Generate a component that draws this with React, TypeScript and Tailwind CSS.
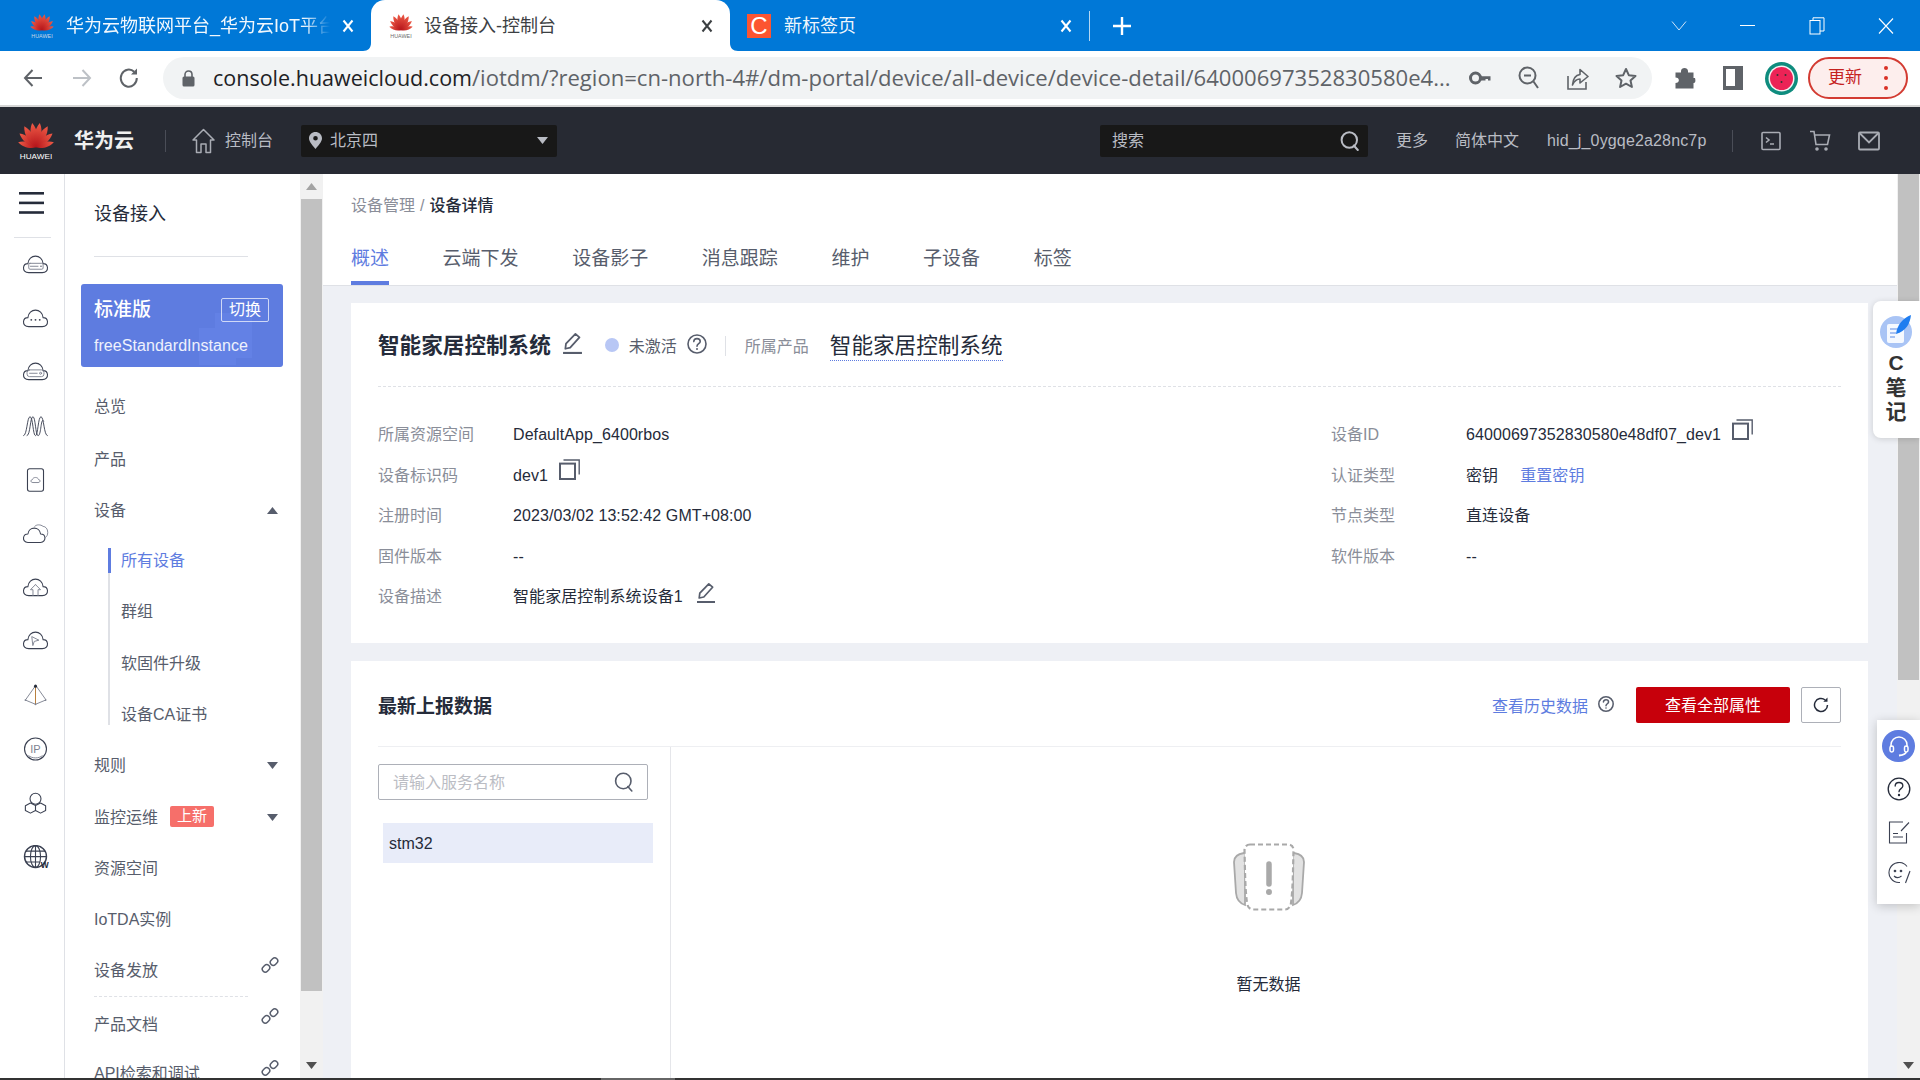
import React from "react";

const stroke = "#3b4152";
const soft = "#7d8290";

function Logo({ w, h, text, fade }: { w: number; h: number; text: string; fade?: boolean }) {
  const petals: [number, number][] = [[-74, 0.98], [-50, 1.14], [-29, 1.28], [-9, 1.3], [9, 1.3], [29, 1.28], [50, 1.14], [74, 0.98]];
  return (
    <svg width={w} height={h} viewBox="0 0 40 44" className="shrink-0">
      <defs>
        <linearGradient id="petal" x1="0" y1="0" x2="0" y2="1">
          <stop offset="0" stopColor={fade ? "#f26b60" : "#ef5b47"} />
          <stop offset="1" stopColor={fade ? "#d9333a" : "#b5141a"} />
        </linearGradient>
      </defs>
      {petals.map(([a, s]) => (
        <path key={a} d="M0 0C-4 -6 -3.8 -15 0 -21C3.8 -15 4 -6 0 0Z" fill="url(#petal)" transform={`translate(20 29) rotate(${a}) scale(${s})`} />
      ))}
      <text x="20" y="42" textAnchor="middle" fontSize="9" fontFamily="Liberation Sans" textLength="36" lengthAdjust="spacingAndGlyphs" fill={text}>HUAWEI</text>
    </svg>
  );
}

const cloud = "M8 23C3.5 23 1.5 20 1.8 17C2.1 14 4.5 12.4 7 12.4C7.4 7 11.5 3.5 16 3.5C20.5 3.5 24.6 7 25 12.4C27.5 12.4 29.9 14 30.2 17C30.5 20 28.5 23 24 23Z";

function RailIcon({ i }: { i: number }) {
  const common = { fill: "none", stroke, strokeWidth: 1.3, strokeLinejoin: "round" as const, strokeLinecap: "round" as const };
  const light = { fill: "none", stroke: soft, strokeWidth: 1.1, strokeLinejoin: "round" as const, strokeLinecap: "round" as const };
  let inner: React.ReactNode = null;
  switch (i) {
    case 0:
      inner = (<><path d={cloud} {...common} /><rect x="8" y="12" width="17" height="7" rx="1.5" {...light} /><path d="M10 15.5h9" {...light} /><circle cx="22.5" cy="15.5" r=".8" fill={stroke} /></>);
      break;
    case 1:
      inner = (<><path d={cloud} {...common} /><circle cx="11" cy="15" r="1.1" fill={stroke} /><circle cx="16" cy="15" r="1.1" fill={stroke} /><circle cx="21" cy="15" r="1.1" fill={stroke} /></>);
      break;
    case 2:
      inner = (<><path d={cloud} {...common} /><rect x="6" y="11.5" width="20" height="8" rx="3" {...light} /><path d="M9 15.5h9" {...light} /><circle cx="22" cy="15.5" r="1.2" {...light} /></>);
      break;
    case 3:
      inner = (<path d="M2 25.5C6 25.5 6 3 9.5 3C13 3 13 25.5 16 25.5C19 25.5 19 3 22.5 3C26 3 26 25.5 30 25.5M6 25.5C10 25.5 9.5 3 13 3C16 3 16 25.5 19 25.5C23 25.5 22 3 25.5 8" {...common} strokeWidth={1.1} />);
      break;
    case 4:
      inner = (<><rect x="6.5" y="0.7" width="19" height="26.6" rx="2.5" {...common} /><path d="M12.5 17C11 17 10.5 15.8 10.6 15C10.8 14 11.6 13.5 12.4 13.5C12.7 11.8 14.4 11 16 11C17.6 11 19.2 11.8 19.6 13.5C20.6 13.5 21.2 14 21.4 15C21.5 15.8 20.8 17 19.5 17Z" {...light} /></>);
      break;
    case 5:
      inner = (<><path d="M7 24C3 24 1.5 21 1.8 18.5C2.2 15.5 4.5 14 7 14C7.5 9.5 11 7 14.5 7C18 7 21.5 9.5 22 14C24.5 14 27 15.5 27.2 18.5C27.4 21 25.5 24 22 24Z" {...common} /><path d="M15 5C17 2.5 22 2.5 25 5C28 5 30.5 8 30.5 12C30.5 15 29.5 17 28 18" {...light} /></>);
      break;
    case 6:
      inner = (<><path d={cloud} {...common} /><path d="M16 10L10 16H13V23M16 10L22 16H19V23" {...light} /></>);
      break;
    case 7:
      inner = (<><path d={cloud} {...common} /><path d="M12 9L20 13L14.5 14.5L13 19Z" {...light} /></>);
      break;
    case 8:
      inner = (<><path d="M16 3L4 20L16 25L28 20Z" {...light} /><path d="M16 3V25" fill="none" stroke="#b9803f" strokeWidth={1.2} /><circle cx="16" cy="3.5" r="1.8" fill="#252b3a" /><circle cx="16" cy="25" r="1" fill={soft} /><circle cx="4" cy="20" r="1" fill={soft} /><circle cx="28" cy="20" r="1" fill={soft} /></>);
      break;
    case 9:
      inner = (<><circle cx="16" cy="14" r="13" {...common} /><path d="M8 22C12 25.5 20 25.5 24 22" {...light} /></>);
      break;
    case 10:
      inner = (<><circle cx="16" cy="9" r="6.5" {...common} /><path d="M10 14L4 17.2V23L10 26L16 23V17L22 14M16 17L10 14M22 14L28 17.2V23L22 26L16 23" {...common} /></>);
      break;
    default:
      inner = (<><circle cx="16" cy="13.5" r="13" {...common} strokeWidth={1.7} /><ellipse cx="16" cy="13.5" rx="6" ry="13" {...common} /><path d="M3 13.5h26M5 7h22M5 20h16M16 1v25" {...common} /></>);
  }
  return (
    <svg width="27" height="24" viewBox="0 0 32 28" className="shrink-0">
      {inner}
      {i === 9 && <text x="16" y="18.5" textAnchor="middle" fontSize="13" fontFamily="Liberation Sans" fill="#7d8290">IP</text>}
      {i === 11 && <text x="27" y="26.5" textAnchor="middle" fontSize="10" fontWeight="700" fontFamily="Liberation Sans" fill="#252b3a">W</text>}
    </svg>
  );
}

function Caret({ up, color = "#575d6c" }: { up?: boolean; color?: string }) {
  return (
    <svg width="11" height="7" viewBox="0 0 11 7" className="shrink-0">
      <path d={up ? "M5.5 0L11 7H0Z" : "M0 0H11L5.5 7Z"} fill={color} />
    </svg>
  );
}

function LinkIcon() {
  return (
    <svg width="18" height="18" viewBox="0 0 18 18" fill="none" stroke="#575d6c" strokeWidth="1.5" className="shrink-0">
      <rect x="1" y="9.4" width="8" height="6" rx="3" transform="rotate(-45 5 12.4)" />
      <rect x="9" y="2.6" width="8" height="6" rx="3" transform="rotate(-45 13 5.6)" />
    </svg>
  );
}

function Pencil({ size = 20, color = "#575d6c" }: { size?: number; color?: string }) {
  return (
    <svg width={size} height={size} viewBox="0 0 20 20" fill="none" stroke={color} strokeWidth="1.7" className="shrink-0">
      <path d="M3.2 15L3.8 10.2L12.8 0.9L16.6 4.2L7.8 14Z" strokeLinejoin="round" />
      <path d="M1 19H19" strokeWidth="2" />
    </svg>
  );
}

function Copy() {
  return (
    <svg width="21" height="21" viewBox="0 0 21 21" fill="none" stroke="#575d6c" className="shrink-0">
      <rect x="1" y="4.6" width="15" height="15.4" strokeWidth="2" />
      <path d="M4.5 1H20.2V15.5" strokeWidth="1.4" />
    </svg>
  );
}

function Help({ size = 18, color = "#575d6c", w = 1.6 }: { size?: number; color?: string; w?: number }) {
  return (
    <svg width={size} height={size} viewBox="0 0 20 20" fill="none" stroke={color} strokeWidth={w} className="shrink-0">
      <circle cx="10" cy="10" r="9" />
      <path d="M6.8 7.6C6.8 5.6 8.3 4.6 10 4.6C11.8 4.6 13.2 5.8 13.2 7.4C13.2 9.6 10 9.8 10 12.2" strokeLinecap="round" />
      <circle cx="10" cy="15" r="1" fill={color} stroke="none" />
    </svg>
  );
}

function Search({ size = 20, color = "#575d6c", w = 1.6 }: { size?: number; color?: string; w?: number }) {
  return (
    <svg width={size} height={size} viewBox="0 0 20 20" fill="none" stroke={color} strokeWidth={w} className="shrink-0">
      <circle cx="9.3" cy="9" r="7.7" />
      <path d="M13.8 14.5L17.8 19" strokeLinecap="round" />
    </svg>
  );
}

function TabX({ color }: { color: string }) {
  return (
    <svg width="12" height="14" viewBox="0 0 12 14" fill="none" stroke={color} strokeWidth="2" className="shrink-0">
      <path d="M1.5 1.5L10.5 12.5M10.5 1.5L1.5 12.5" />
    </svg>
  );
}

const navLabel = "flex items-center pl-[29px] pr-[22px] pt-[2px] text-[16px] text-[#575d6c]";

function Scroll({ thumb, top }: { thumb: string; top: string }) {
  return (
    <div className="w-[23px] shrink-0 bg-[#f1f1f1] flex flex-col items-center">
      {top === "arrow" ? (
        <div className="h-[25px] shrink-0 flex items-center justify-center"><Caret up color="#a3a3a3" /></div>
      ) : null}
      <div className={thumb} />
      <div className="flex-1" />
      <div className="h-[26px] shrink-0 flex items-center justify-center">
        <Caret color="#505050" />
      </div>
    </div>
  );
}

function InfoRow({ label, children }: { label: string; children: React.ReactNode }) {
  return (
    <div className="h-[40.5px] flex items-center text-[16px]">
      <div className="w-[135px] text-[#8a8e99] shrink-0">{label}</div>
      <div className="flex items-center text-[#252b3a] whitespace-nowrap tracking-[0.08px]">{children}</div>
    </div>
  );
}

export default function App() {
  return (
    <div className="relative w-[1920px] h-[1080px] overflow-hidden flex flex-col bg-white font-['Liberation_Sans','Noto_Sans_CJK_SC',sans-serif]">
      {/* browser tabs */}
      <div className="h-[51px] shrink-0 bg-[#0078d7] flex items-center">
        <div className="w-[371px] h-full flex items-center pl-[30px] shrink-0">
          <Logo w={24} h={26} text="#c9d6e6" />
          <div className="w-[264px] ml-[12px] pt-[2px] overflow-hidden whitespace-nowrap text-[18px] text-white/95 [mask-image:linear-gradient(to_right,black_90%,transparent)]">华为云物联网平台_华为云IoT平台</div>
          <div className="ml-[12px]"><TabX color="#ffffff" /></div>
        </div>
        <div className="relative w-[359px] h-full bg-white rounded-t-[14px] flex items-center pl-[18px] shrink-0">
          <svg width="8" height="8" viewBox="0 0 8 8" className="absolute -left-[8px] bottom-0"><path d="M8 0V8H0C5 8 8 5 8 0Z" fill="#fff" /></svg>
          <svg width="8" height="8" viewBox="0 0 8 8" className="absolute -right-[8px] bottom-0"><path d="M0 0V8H8C3 8 0 5 0 0Z" fill="#fff" /></svg>
          <Logo w={24} h={26} text="#6b6b6b" fade />
          <div className="w-[276px] ml-[11px] pt-[2px] whitespace-nowrap text-[18px] text-[#3c4043]">设备接入-控制台</div>
          <div className="ml-[1px]"><TabX color="#3c4043" /></div>
        </div>
        <div className="w-[359px] h-full flex items-center pl-[17px] shrink-0">
          <div className="w-[24px] h-[24px] bg-[#fc5531] flex items-center justify-center text-white text-[24px] leading-none shrink-0">C</div>
          <div className="w-[276px] ml-[13px] pt-[2px] whitespace-nowrap text-[18px] text-white/95">新标签页</div>
          <div><TabX color="#ffffff" /></div>
        </div>
        <div className="w-px h-[30px] bg-white/70 shrink-0" />
        <svg width="18" height="18" viewBox="0 0 18 18" stroke="#fff" strokeWidth="2.4" className="ml-[23px] shrink-0"><path d="M9 0V18M0 9H18" /></svg>
        <div className="flex-1" />
        <div className="flex items-center text-white">
          <div className="w-[69px] flex justify-center"><svg width="16" height="10" viewBox="0 0 16 10" fill="none" stroke="#cfe4f7" strokeWidth="1"><path d="M1 .5L8 9L15 .5" /></svg></div>
          <div className="w-[69px] flex justify-center"><div className="w-[15px] h-px bg-white" /></div>
          <div className="w-[69px] flex justify-center"><svg width="16" height="18" viewBox="0 0 16 18" fill="none" stroke="#fff" strokeWidth="1"><rect x="1" y="3.5" width="10" height="13.5" /><path d="M4 3.5V.8H15V14H11" /></svg></div>
          <div className="w-[69px] flex justify-center"><svg width="16" height="16" viewBox="0 0 16 16" fill="none" stroke="#fff" strokeWidth="1.1"><path d="M1 .5L15 15.5M15 .5L1 15.5" /></svg></div>
        </div>
      </div>
      {/* toolbar */}
      <div className="h-[54px] shrink-0 bg-white flex items-center pl-[8px]">
        <div className="w-[49px] flex justify-center"><svg width="20" height="20" viewBox="0 0 20 20" fill="none" stroke="#5f6368" strokeWidth="2"><path d="M19 10H2M9.5 2L2 10L9.5 18" /></svg></div>
        <div className="w-[49px] flex justify-center"><svg width="20" height="20" viewBox="0 0 20 20" fill="none" stroke="#bdc1c6" strokeWidth="2"><path d="M1 10H18M10.5 2L18 10L10.5 18" /></svg></div>
        <div className="w-[49px] pr-[3px] flex justify-center"><svg width="22" height="22" viewBox="0 0 22 22" fill="none" stroke="#5f6368" strokeWidth="2"><path d="M18.8 11A8 8.6 0 1 1 16.2 4.8" /><path d="M19 1.5V7.5H13Z" fill="#5f6368" stroke="none" /></svg></div>
        <div className="ml-[8px] w-[1489px] h-[42px] rounded-full bg-[#f1f3f4] flex items-center pl-[19px] shrink-0">
          <svg width="13" height="17" viewBox="0 0 13 17" className="shrink-0"><path d="M3 7V4.5C3 2.5 4.5 1 6.5 1S10 2.5 10 4.5V7" fill="none" stroke="#5f6368" strokeWidth="1.6" /><rect x="0.5" y="6.5" width="12" height="10" rx="1.5" fill="#5f6368" /></svg>
          <div className="w-[1240px] ml-[18px] -mt-[1px] whitespace-nowrap overflow-hidden font-['Open_Sans','Noto_Sans',sans-serif]">
            <span className="text-[21.5px] text-[#202124]">console.huaweicloud.com</span><span className="text-[22.08px] text-[#5f6368]">/iotdm/?region=cn-north-4#/dm-portal/device/all-device/device-detail/64000697352830580e4...</span>
          </div>
          <div className="w-[49px] flex justify-center ml-[2px]"><svg width="22" height="14" viewBox="0 0 22 14"><circle cx="6.5" cy="7" r="5" fill="none" stroke="#5f6368" strokeWidth="3" /><path d="M11 5.2H21.5V9.5H19V8H16.5V9.5H11Z" fill="#5f6368" /></svg></div>
          <div className="w-[49px] flex justify-center"><svg width="22" height="24" viewBox="0 0 22 24" fill="none" stroke="#5f6368" strokeWidth="2"><circle cx="9.5" cy="9.5" r="8" /><path d="M15.5 15.5L20 22M6 9.5H13" /></svg></div>
          <div className="w-[49px] flex justify-center"><svg width="22" height="24" viewBox="0 0 22 24" fill="none" stroke="#5f6368" strokeWidth="1.6"><path d="M1 10V23H19V16" /><path d="M5.5 19C6 12 9.5 9 13 8.5V3.5L21 10.5L13 17V13C10 13 7.5 14.5 5.5 19Z" strokeLinejoin="round" /></svg></div>
          <div className="w-[47px] flex justify-center"><svg width="22" height="22" viewBox="0 0 22 22" fill="none" stroke="#5f6368" strokeWidth="2" strokeLinejoin="round"><path d="M11 2L13.8 8.2L20.5 9L15.5 13.5L16.9 20L11 16.7L5.1 20L6.5 13.5L1.5 9L8.2 8.2Z" /></svg></div>
        </div>
        <div className="ml-[9px] w-[48px] flex justify-center"><svg width="22" height="24" viewBox="0 0 22 24" fill="#5f6368"><path d="M7 5C7 1 14 1 14 5V6.5H19.5V12H21C22 16 21 17 19.5 17V22.5H1.5V17C6 17 6 11.5 1.5 11.5V6.5H7Z" /></svg></div>
        <div className="w-[48px] flex justify-center"><div className="w-[20px] h-[24px] border-[3px] border-[#5f6368] border-r-[8px] border-b-[4px]" /></div>
        <div className="w-[48px] flex justify-center">
          <svg width="33" height="33" viewBox="0 0 33 33"><circle cx="16.5" cy="16.5" r="16.5" fill="#0f8c7e" /><circle cx="16.5" cy="16.5" r="13" fill="#f5f5f5" /><circle cx="16.5" cy="16.5" r="11.5" fill="#ec2356" /><circle cx="12.5" cy="13" r="1" fill="#333" /><circle cx="20.5" cy="13" r="1" fill="#333" /><circle cx="16.5" cy="20" r="1" fill="#333" /></svg>
        </div>
        <div className="ml-[3px] w-[100px] h-[42px] rounded-full border-2 border-[#d33b32] bg-[#fdeeed] flex items-center pl-[18px] shrink-0">
          <span className="text-[17px] text-[#c5221f] w-[54px]">更新</span>
          <div className="flex flex-col gap-[6px] ml-[2px]"><div className="w-[4px] h-[4px] rounded-full bg-[#d93025]" /><div className="w-[4px] h-[4px] rounded-full bg-[#d93025]" /><div className="w-[4px] h-[4px] rounded-full bg-[#d93025]" /></div>
        </div>
      </div>
      <div className="h-[2px] shrink-0 bg-[#d6d6d6]" />
      {/* console header */}
      <div className="h-[67px] shrink-0 bg-[#272a33] flex items-center pl-[18px] text-[16px] text-[#b9bcc4]">
        <Logo w={36} h={40} text="#ffffff" />
        <div className="ml-[20px] pt-[1px] text-[20px] font-bold text-[#f0f0f0] w-[60px] whitespace-nowrap">华为云</div>
        <div className="ml-[31px] w-px h-[22px] bg-[#4a4d57]" />
        <svg width="23" height="26" viewBox="0 0 23 26" fill="none" stroke="#a9acb4" strokeWidth="1.5" className="ml-[26px] shrink-0"><path d="M1 12L11.5 1.5L22 12H18.5V24.5H14V16H9V24.5H4.5V12Z" strokeLinejoin="round" /></svg>
        <div className="ml-[10px] pt-[1px] w-[48px] whitespace-nowrap">控制台</div>
        <div className="ml-[28px] w-[256px] h-[32px] rounded-[2px] bg-[#181818] flex items-center pl-[8px] pr-[9px] shrink-0">
          <svg width="13" height="17" viewBox="0 0 13 17" className="shrink-0"><path fillRule="evenodd" d="M6.5 0C10 0 13 2.7 13 6.3C13 10 9 14 6.5 17C4 14 0 10 0 6.3C0 2.7 3 0 6.5 0ZM6.5 4A2.3 2.3 0 1 0 6.5 8.6A2.3 2.3 0 1 0 6.5 4Z" fill="#b9bcc4" /></svg>
          <div className="ml-[8px] pt-[1px] flex-1 whitespace-nowrap">北京四</div>
          <Caret color="#b9bcc4" />
        </div>
        <div className="ml-[543px] w-[268px] h-[32px] rounded-[2px] bg-[#181818] flex items-center pl-[12px] pr-[8px] shrink-0">
          <div className="flex-1 pt-[1px]">搜索</div>
          <Search size={20} color="#b9bcc4" w={2} />
        </div>
        <div className="ml-[28px] pt-[1px] w-[32px] whitespace-nowrap">更多</div>
        <div className="ml-[27px] pt-[1px] w-[66px] whitespace-nowrap">简体中文</div>
        <div className="ml-[26px] pt-[1px] w-[159px] whitespace-nowrap text-[16px] tracking-[0.15px]">hid_j_0ygqe2a28nc7p</div>
        <div className="ml-[26px] w-px h-[22px] bg-[#4a4d57]" />
        <div className="ml-[14px] w-[48px] flex justify-center"><svg width="20" height="20" viewBox="0 0 20 20" fill="none" stroke="#a9acb4" strokeWidth="1.6"><rect x="1" y="1.5" width="18" height="17" rx="1" /><path d="M5 6.5L8 9L5 11.5M9 13H13" /></svg></div>
        <div className="w-[49px] flex justify-center"><svg width="22" height="22" viewBox="0 0 22 22" fill="none" stroke="#a9acb4" strokeWidth="1.6"><path d="M1 1.5H5L7 14.5H18.5L20.5 5H6" /><circle cx="8" cy="19" r="1" fill="#a9acb4" /><circle cx="17" cy="19" r="1" fill="#a9acb4" /></svg></div>
        <div className="w-[49px] flex justify-center"><svg width="22" height="20" viewBox="0 0 22 20" fill="none" stroke="#a9acb4" strokeWidth="1.8"><rect x="1" y="1.5" width="20" height="17" rx="1" /><path d="M1.5 2L11 11.5L20.5 2" /></svg></div>
      </div>
      {/* body */}
      <div className="h-[904px] shrink-0 flex overflow-hidden">
        {/* rail */}
        <div className="w-[65px] shrink-0 border-r border-[#dfe1e6] flex flex-col items-center pt-[18px]">
          <svg width="25" height="22" viewBox="0 0 25 22" className="shrink-0 -ml-[2px]" fill="#252b3a"><rect y="0" width="25" height="2.6" /><rect y="9.6" width="25" height="2.6" /><rect y="19.2" width="25" height="2.6" /></svg>
          <div className="mt-[23px] w-[37px] h-px bg-[#dfe1e6]" />
          {[0, 1, 2, 3, 4, 5, 6, 7, 8, 9, 10, 11].map((i) => (
            <div key={i} className="h-[53.8px] w-full pl-[6px] flex items-center justify-center shrink-0"><RailIcon i={i} /></div>
          ))}
        </div>
        {/* nav */}
        <div className="w-[235px] shrink-0 flex flex-col overflow-hidden">
          <div className="ml-[29px] w-[154px] h-[83px] shrink-0 border-b border-[#dfe1e6] pt-[28px] text-[18px] leading-[24px] text-[#252b3a]">设备接入</div>
          <div className="relative mt-[27px] ml-[16px] w-[202px] h-[83px] shrink-0 rounded-[3px] bg-[#5e7ce0] overflow-hidden pl-[13px] text-white">
            <div className="absolute left-[118px] top-[44px] w-[37px] h-[37px] bg-[#6381e5]" />
            <div className="absolute left-[134px] top-[29px] w-[37px] h-[45px] bg-[#6381e5]" />
            <div className="relative flex items-center mt-[13px] h-[26px]">
              <span className="text-[19px] font-medium w-[127px] pt-[1px]">标准版</span>
              <span className="w-[48px] h-[24px] border border-white/70 rounded-[2px] flex items-center justify-center text-[16px]">切换</span>
            </div>
            <div className="relative mt-[11px] text-[16px] leading-[24px] text-white/90 whitespace-nowrap tracking-[0.05px]">freeStandardInstance</div>
          </div>
          <div className={`${navLabel} h-[52px] mt-[13px] shrink-0`}>总览</div>
          <div className={`${navLabel} h-[54px] shrink-0`}>产品</div>
          <div className={`${navLabel} h-[48px] shrink-0 justify-between`}>设备<span className="-mt-[2px]"><Caret up /></span></div>
          <div className="mt-[14px] ml-[43px] h-[177px] shrink-0 border-l-2 border-[#dfe1e6] text-[16px] text-[#575d6c]">
            <div className="-ml-[2px] h-[25px] border-l-[3px] border-[#5e7ce0] pl-[10px] flex items-center text-[#5e7ce0]">所有设备</div>
            <div className="mt-[26px] h-[26px] pl-[11px] flex items-center">群组</div>
            <div className="mt-[26px] h-[26px] pl-[11px] flex items-center">软固件升级</div>
            <div className="mt-[25px] h-[26px] pl-[11px] flex items-center">设备CA证书</div>
          </div>
          <div className={`${navLabel} h-[54px] mt-[13px] shrink-0 justify-between`}>规则<span className="-mt-[2px]"><Caret /></span></div>
          <div className={`${navLabel} h-[50px] shrink-0`}>
            <span className="w-[65px] whitespace-nowrap">监控运维</span>
            <span className="ml-[11px] w-[44px] h-[21px] -mt-[3px] bg-[#f66f6a] rounded-[2px] flex items-center justify-center text-white text-[15px]">上新</span>
            <div className="ml-auto -mt-[2px]"><Caret /></div>
          </div>
          <div className={`${navLabel} h-[52px] shrink-0`}>资源空间</div>
          <div className={`${navLabel} h-[50px] shrink-0`}>IoTDA实例</div>
          <div className={`${navLabel} h-[52px] shrink-0 justify-between`}><span>设备发放</span><span className="-mt-[13px] -mr-[1px]"><LinkIcon /></span></div>
          <div className="ml-[29px] w-[154px] border-t border-dashed border-[#dfe1e6] shrink-0" />
          <div className={`${navLabel} h-[53px] shrink-0 justify-between`}><span>产品文档</span><span className="-mt-[18px] -mr-[1px]"><LinkIcon /></span></div>
          <div className={`${navLabel} h-[46px] shrink-0 justify-between`}><span className="whitespace-nowrap">API检索和调试</span><span className="-mt-[13px] -mr-[1px]"><LinkIcon /></span></div>
        </div>
        <Scroll top="arrow" thumb="w-[21px] h-[792px] shrink-0 bg-[#c1c1c1]" />
        {/* main */}
        <div className="flex-1 bg-[#eef0f5] flex flex-col overflow-hidden">
          <div className="h-[112px] shrink-0 bg-white border-b border-[#dfe1e6] pl-[28px]">
            <div className="pt-[20px] text-[16px] leading-[24px] text-[#8a8e99]">设备管理<span className="mx-[5px]">/</span><span className="text-[#252b3a] font-medium">设备详情</span></div>
            <div className="mt-[26px] flex gap-[53.6px] text-[19px] leading-[28px] text-[#575d6c]">
              <div className="pt-[1px] pb-[8px] border-b-4 border-[#5e7ce0] text-[#5e7ce0]">概述</div>
              {["云端下发", "设备影子", "消息跟踪", "维护", "子设备", "标签"].map((t) => (
                <div key={t} className="pt-[1px] pb-[8px]">{t}</div>
              ))}
            </div>
          </div>
          {/* card 1 */}
          <div className="mt-[17px] ml-[28px] w-[1517px] h-[340px] shrink-0 bg-white">
            <div className="mx-[27px] h-[84px] border-b border-dashed border-[#dfe1e6] pt-[26px] flex items-start">
              <div className="h-[32px] flex items-center whitespace-nowrap">
                <span className="text-[21.6px] font-bold text-[#252b3a] pt-[2px]">智能家居控制系统</span>
                <span className="ml-[11px] -mt-[3px]"><Pencil size={21} /></span>
                <span className="ml-[22px] w-[14px] h-[14px] rounded-full bg-[#b8c7f5]" />
                <span className="ml-[10px] text-[16px] text-[#575d6c] mt-[3px]">未激活</span>
                <span className="ml-[10px] -mt-[3px]"><Help size={20} /></span>
                <span className="ml-[18px] w-px h-[20px] bg-[#dfe1e6] mt-[2px]" />
                <span className="ml-[19px] text-[16px] text-[#8a8e99] mt-[3px]">所属产品</span>
                <span className="ml-[21px] text-[21.6px] text-[#252b3a] leading-[28px] mt-[3px] border-b border-dotted border-[#5e7ce0]">智能家居控制系统</span>
              </div>
            </div>
            <div className="mt-[28px] ml-[27px] grid grid-cols-[953px_1fr]">
              <div>
                <InfoRow label="所属资源空间">DefaultApp_6400rbos</InfoRow>
                <InfoRow label="设备标识码"><span>dev1</span><span className="ml-[11px] -mt-[12px]"><Copy /></span></InfoRow>
                <InfoRow label="注册时间">2023/03/02 13:52:42 GMT+08:00</InfoRow>
                <InfoRow label="固件版本">--</InfoRow>
                <InfoRow label="设备描述"><span>智能家居控制系统设备1</span><span className="ml-[13px] -mt-[8px]"><Pencil /></span></InfoRow>
              </div>
              <div>
                <InfoRow label="设备ID"><span>64000697352830580e48df07_dev1</span><span className="ml-[11px] -mt-[12px]"><Copy /></span></InfoRow>
                <InfoRow label="认证类型"><span>密钥</span><span className="ml-[22px] text-[#5e7ce0]">重置密钥</span></InfoRow>
                <InfoRow label="节点类型">直连设备</InfoRow>
                <InfoRow label="软件版本">--</InfoRow>
              </div>
            </div>
          </div>
          {/* card 2 */}
          <div className="mt-[18px] ml-[28px] w-[1517px] flex-1 bg-white px-[27px] flex flex-col">
            <div className="h-[86px] shrink-0 pt-[3px] border-b border-[#eeeff2] flex items-center">
              <div className="text-[19px] font-bold text-[#252b3a] pt-[4px]">最新上报数据</div>
              <div className="ml-auto text-[16px] text-[#5e7ce0] pt-[3px]">查看历史数据</div>
              <span className="ml-[10px] -mt-[3px]"><Help size={16} w={1.9} /></span>
              <button className="ml-[22px] w-[154px] h-[36px] rounded-[2px] bg-[#c7000b] text-white text-[16px] pt-[1px]">查看全部属性</button>
              <div className="ml-[11px] w-[40px] h-[36px] rounded-[2px] border border-[#adb0b8] flex items-center justify-center">
                <svg width="16" height="16" viewBox="0 0 16 16" fill="none" stroke="#252b3a" strokeWidth="1.5"><path d="M14.5 8A6.5 6.5 0 1 1 12.2 3" /><path d="M14.5 .6V4.8H10.3Z" fill="#252b3a" stroke="none" /></svg>
              </div>
            </div>
            <div className="flex-1 flex">
              <div className="w-[293px] shrink-0 border-r border-[#e5e6ea] pt-[17px]">
                <div className="w-[270px] h-[36px] rounded-[2px] border border-[#adb0b8] flex items-center pl-[14px] pr-[13px]">
                  <span className="flex-1 text-[16px] text-[#bbbdc4] pt-[1px]">请输入服务名称</span>
                  <Search size={20} color="#575d6c" />
                </div>
                <div className="mt-[23px] ml-[5px] w-[270px] h-[40px] bg-[#e8ecf9] flex items-center pl-[6px] pt-[1px] text-[16px] text-[#252b3a]">stm32</div>
              </div>
              <div className="flex-1 pl-[25px] pt-[96px] flex flex-col items-center">
                <svg width="72" height="68" viewBox="0 0 72 68" fill="none" className="shrink-0">
                  <path d="M11 10C4 11 1 14 1 19L3 50C3.5 56 6 60 12 62V10Z" fill="#e2e2e2" stroke="#a9a9a9" strokeWidth="1.8" />
                  <path d="M61 10C68 11 71 14 71 19L69 50C68.5 56 66 60 60 62V10Z" fill="#e2e2e2" stroke="#a9a9a9" strokeWidth="1.8" />
                  <path d="M17 1.5H55C58.5 1.5 60.5 4 60.5 7C60 25 60 45 58 60C57.5 64 55 66.5 52 66.5H20C17 66.5 14.5 64 14 60C12 45 12 25 11.5 7C11.5 4 13.5 1.5 17 1.5Z" fill="#fff" stroke="#a9a9a9" strokeWidth="2.2" strokeDasharray="5 3" />
                  <path d="M36 21V41" stroke="#a9a9a9" strokeWidth="5.5" strokeLinecap="round" />
                  <circle cx="36" cy="49" r="3" fill="#a9a9a9" />
                </svg>
                <div className="mt-[62px] h-[24px] text-[16px] leading-[24px] text-[#252b3a]">暂无数据</div>
              </div>
            </div>
          </div>
        </div>
        <Scroll top="none" thumb="w-[21px] h-[506px] shrink-0 bg-[#c1c1c1]" />
      </div>
      <div className="h-[2px] shrink-0 bg-[#333333] flex"><div className="ml-[601px] w-[74px] bg-[#666666]" /></div>
      {/* floating note */}
      <div className="absolute left-[1873px] top-[301px] w-[47px] h-[137px] bg-white rounded-l-[8px] shadow-[0_1px_6px_rgba(0,0,0,0.15)] flex flex-col items-center pt-[13px] pr-[1px]">
        <svg width="32" height="34" viewBox="0 0 32 34" className="shrink-0">
          <circle cx="16" cy="18" r="16" fill="#a9c4f5" />
          <rect x="7" y="10" width="17" height="19" rx="2" fill="#f5f9ff" />
          <path d="M10 15h8M10 19h6M10 23h5" stroke="#8fb0ee" strokeWidth="1.4" />
          <path d="M16 20C17 11 23 4 31 1C30 10 26 17 16 20Z" fill="#1f7df0" />
        </svg>
        <div className="mt-[3px] text-[21px] leading-[24px] font-bold text-[#333333]">C</div>
        <div className="text-[21px] leading-[25px] font-bold text-[#333333]">笔</div>
        <div className="text-[21px] leading-[24px] font-bold text-[#333333]">记</div>
      </div>
      {/* floating help */}
      <div className="absolute left-[1877px] top-[720px] w-[43px] h-[184px] bg-white shadow-[0_2px_10px_rgba(0,0,0,0.2)] flex flex-col items-center pt-[10px]">
        <div className="w-[33px] h-[32px] rounded-full bg-[#5e7ce0] flex items-center justify-center shrink-0">
          <svg width="22" height="22" viewBox="0 0 22 22" fill="none" stroke="#fff" strokeWidth="1.5"><path d="M3 12V10A8 8 0 0 1 19 10V12" /><rect x="2" y="11" width="3.5" height="6" rx="1.7" /><rect x="16.5" y="11" width="3.5" height="6" rx="1.7" /><path d="M18 17C18 19.5 15 20 11 20.5" strokeWidth="1.8" /></svg>
        </div>
        <div className="mt-[15px]"><Help size={24} color="#252b3a" w={1.1} /></div>
        <div className="mt-[20px]">
          <svg width="22" height="23" viewBox="0 0 22 23" fill="none" stroke="#3b4152" strokeWidth="1.1"><path d="M15 1H1.5V22H18.5V12" /><path d="M13 10L21 1.5" /><path d="M5 12.5H10M5 16H15" /></svg>
        </div>
        <div className="mt-[18px]">
          <svg width="24" height="22" viewBox="0 0 24 22" fill="none" stroke="#3b4152" strokeWidth="1.1"><path d="M20 4.5A10 10 0 1 0 13 20.5" /><path d="M23 9L18.5 21" /><circle cx="8" cy="9" r=".8" fill="#3b4152" /><circle cx="14" cy="9" r=".8" fill="#3b4152" /><path d="M7 14C9 16 12 16 14.5 14" /></svg>
        </div>
      </div>
    </div>
  );
}
